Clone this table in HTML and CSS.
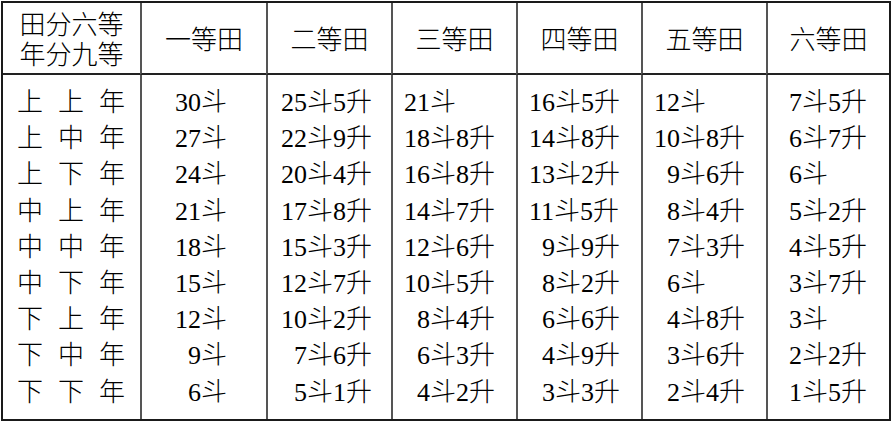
FILE: index.html
```html
<!DOCTYPE html>
<html lang="zh">
<head>
<meta charset="utf-8">
<link rel="stylesheet" href="styles.css">
</head>
<body>
<div class="sheet">
  <div class="head corner"><div>田分六等</div><div>年分九等</div></div>
  <div class="head">一等田</div>
  <div class="head">二等田</div>
  <div class="head">三等田</div>
  <div class="head">四等田</div>
  <div class="head">五等田</div>
  <div class="head">六等田</div>

  <div class="col years">
    <div>上上年</div><div>上中年</div><div>上下年</div>
    <div>中上年</div><div>中中年</div><div>中下年</div>
    <div>下上年</div><div>下中年</div><div>下下年</div>
  </div>
  <div class="col c1">
    <div>30斗</div><div>27斗</div><div>24斗</div><div>21斗</div><div>18斗</div><div>15斗</div><div>12斗</div><div><span class="sp"></span>9斗</div><div><span class="sp"></span>6斗</div>
  </div>
  <div class="col c2">
    <div>25斗5升</div><div>22斗9升</div><div>20斗4升</div><div>17斗8升</div><div>15斗3升</div><div>12斗7升</div><div>10斗2升</div><div><span class="sp"></span>7斗6升</div><div><span class="sp"></span>5斗1升</div>
  </div>
  <div class="col c3">
    <div>21斗</div><div>18斗8升</div><div>16斗8升</div><div>14斗7升</div><div>12斗6升</div><div>10斗5升</div><div><span class="sp"></span>8斗4升</div><div><span class="sp"></span>6斗3升</div><div><span class="sp"></span>4斗2升</div>
  </div>
  <div class="col c4">
    <div>16斗5升</div><div>14斗8升</div><div>13斗2升</div><div>11斗5升</div><div><span class="sp"></span>9斗9升</div><div><span class="sp"></span>8斗2升</div><div><span class="sp"></span>6斗6升</div><div><span class="sp"></span>4斗9升</div><div><span class="sp"></span>3斗3升</div>
  </div>
  <div class="col c5">
    <div>12斗</div><div>10斗8升</div><div><span class="sp"></span>9斗6升</div><div><span class="sp"></span>8斗4升</div><div><span class="sp"></span>7斗3升</div><div><span class="sp"></span>6斗</div><div><span class="sp"></span>4斗8升</div><div><span class="sp"></span>3斗6升</div><div><span class="sp"></span>2斗4升</div>
  </div>
  <div class="col c6">
    <div>7斗5升</div><div>6斗7升</div><div>6斗</div><div>5斗2升</div><div>4斗5升</div><div>3斗7升</div><div>3斗</div><div>2斗2升</div><div>1斗5升</div>
  </div>
</div>
</body>
</html>
```

FILE: styles.css
```css
html, body {
  margin: 0;
  padding: 0;
  background: #ffffff;
}

body {
  font-family: "Liberation Serif", "Noto Sans CJK SC", serif;
  font-size: 26px;
  color: #000000;
}

.sheet {
  box-sizing: border-box;
  width: 890px;
  height: 420px;
  margin: 1px;
  border: 2px solid #1a1a1a;
  display: grid;
  grid-template-columns: 137px 126px 125px 125px 125px 125px 1fr;
  grid-template-rows: 72px 1fr;
}

.head {
  display: flex;
  flex-direction: column;
  align-items: center;
  justify-content: center;
  padding-top: 5px;
  border-bottom: 2px solid #222222;
  border-left: 2px solid #555555;
  font-weight: 300;
  line-height: 30px;
}

.head.corner {
  border-left: none;
}

.col {
  border-left: 2px solid #555555;
  padding-top: 10px;
  line-height: 36.2px;
  white-space: nowrap;
  font-weight: 300;
}

.col.years {
  border-left: none;
  padding-left: 14px;
  letter-spacing: 15px;
}

.sp {
  display: inline-block;
  width: 13px;
}

.c1 { padding-left: 33px; }
.c2 { padding-left: 13px; }
.c3 { padding-left: 11px; }
.c4 { padding-left: 11px; }
.c5 { padding-left: 11px; }
.c6 { padding-left: 21px; }
```
